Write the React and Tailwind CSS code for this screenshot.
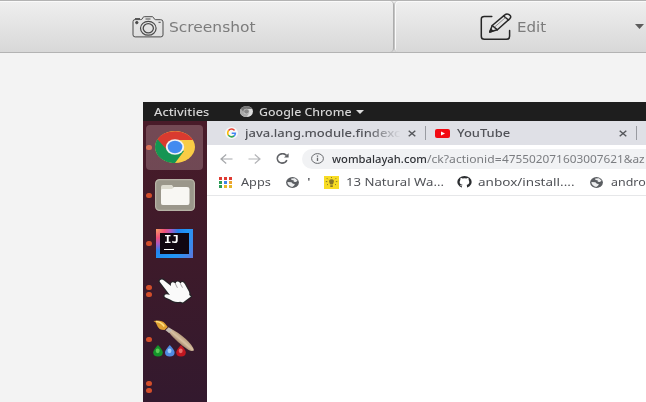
import React, { useLayoutEffect, useRef, useState } from "react";

/* Single line label stretched horizontally to occupy a given width. */
function Label({ width, className = "", children }) {
  const ref = useRef(null);
  const [scale, setScale] = useState(1);
  useLayoutEffect(() => {
    setScale(width / ref.current.offsetWidth);
  }, [width]);
  return (
    <span className="block shrink-0" style={{ width }}>
      <span
        ref={ref}
        className={"inline-block origin-left whitespace-nowrap align-top " + className}
        style={{ transform: `scaleX(${scale})` }}
      >
        {children}
      </span>
    </span>
  );
}

function Camera() {
  return (
    <svg className="h-[22px] w-8 shrink-0" viewBox="0 0 32 22" fill="none" stroke="#4a4a4a" strokeWidth="1">
      <path d="M10 3.2 11.2 1.2Q11.6.7 12.3.7h7.8q.8 0 1.2.6l1.2 1.9q.4.5 1.2.5h5q2.3 0 2.3 2.2v13q0 2-2.2 2H3.2q-2.2 0-2.2-2V5.6q0-2 2-2h5.4q1.1 0 1.6-.4Z" />
      <ellipse cx="16.3" cy="12.3" rx="7.8" ry="6.9" strokeWidth="1.2" />
      <ellipse cx="16.3" cy="12.3" rx="5.1" ry="4.6" strokeWidth="1.3" />
      <path d="M13.5 3h5M3 2.6h5M26.5 6.3h2.2" />
      <circle cx="4.8" cy="6.6" r="1.2" fill="#444" />
    </svg>
  );
}

function EditIcon() {
  return (
    <svg className="h-7 w-8 shrink-0" viewBox="0 0 32 28" fill="none" stroke="#262626" strokeWidth="1.5" strokeLinecap="round" strokeLinejoin="round">
      <path d="M11.8 3.4H4.3Q1.3 3.4 1.3 6.2v17q0 3.1 3.1 3.1h22q3.2 0 3.2-3.1v-5.7" />
      <path d="m9.8 19 2.4-6.5L24.8 1.9q1.8-1.6 3.9-.5l1 .7q2 1.5.2 3.5L17.4 16.8Z" />
      <path d="m12.2 12.5 5.2 4.3M23.6 3l4.9 4" />
      <path d="m9.8 19 3-.9-2-1.8Z" fill="#262626" />
      <path d="M15.1 13.6 25.2 4.8" strokeWidth=".7" stroke="#666" />
    </svg>
  );
}

function ChromeIcon({ className, gray }) {
  const [r, g, y, b] = gray ? ["#777", "#aaa", "#ddd", "#888"] : ["#d93a2f", "#159553", "#f9cc45", "#438bf0"];
  return (
    <svg className={className} viewBox="0 0 40 32" preserveAspectRatio="none">
      <ellipse cx="20" cy="16" rx="20" ry="16" fill={y} />
      <path d="M2.5 8.3A20 16 0 0 0 20 32L29 20 20 16Z" fill={g} />
      <path d="M2.5 8.3C9-2.2 31-3 38 9H20L12 19Z" fill={r} />
      <ellipse cx="20" cy="16" rx="9.2" ry="7.8" fill={gray ? "#ccc" : "#f2f3f4"} />
      <ellipse cx="20" cy="16" rx="7.3" ry="6.2" fill={b} />
    </svg>
  );
}

function Google() {
  return (
    <svg className="h-3 w-[13px] shrink-0" viewBox="0 0 14 12" preserveAspectRatio="none">
      <ellipse cx="7" cy="6" rx="7" ry="6" fill="#f8f8f8" />
      <g fill="none" strokeWidth="1.6">
        <path d="M10.3 3.3Q6.5.6 3.7 3.6" stroke="#e84335" />
        <path d="M3.8 3.5Q2 6 3.7 8.4" stroke="#fbbc05" />
        <path d="M3.6 8.3Q6.2 11 9.8 9" stroke="#34a853" />
        <path d="M7.2 6.2h4q0 1.9-1.5 3" stroke="#4285f4" />
      </g>
    </svg>
  );
}

function Globe() {
  return (
    <svg className="h-[11px] w-[13px] shrink-0" viewBox="0 0 13 11">
      <ellipse cx="6.5" cy="5.5" rx="6.4" ry="5.4" fill="#5b5e62" />
      <path d="M5.2 1.5 9 1.2l2.6 2.5-1.8 1.4-2-.4L7.6 3.3 5.4 3.1ZM1.4 5.1l4 .1 1.5 1.5 1.9.4-.6 1.5-2 1.3Q1.5 8.9 1.4 5.1Z" fill="#edeeef" />
    </svg>
  );
}

function AppsGrid() {
  const colors = ["#df3b32", "#df3b32", "#df3b32", "#2d9d58", "#3c83e8", "#eda32e", "#2d9d58", "#e5b62b", "#e5b62b"];
  return (
    <div className="grid h-[11px] w-[13px] shrink-0 grid-cols-3 grid-rows-3 gap-x-[2px] gap-y-px">
      {colors.map((c, i) => (
        <span key={i} style={{ backgroundColor: c }} />
      ))}
    </div>
  );
}

function Bulb() {
  return (
    <svg className="h-[13px] w-[15px] shrink-0" viewBox="0 0 15 13">
      <path d="M0 0h15v13H0Z" fill="#f8dc24" />
      <path d="M5.6 7.3Q4 3.2 7.5 3.2T9.4 7.3L8.7 8.5H6.3ZM6.3 9.2h2.5v1.9H6.3Z" fill="#85752a" />
      <path d="M7.5 1v1M2.8 2.2l1 1M12.2 2.2l-1 1M1.8 5.6h1.5M11.8 5.6h1.5M3 9l1-.8M12 9l-1-.8" stroke="#6d6229" strokeWidth=".8" />
    </svg>
  );
}

function Octocat() {
  return (
    <svg className="h-3 w-[15px] shrink-0" viewBox="0 0 15 12">
      <ellipse cx="7.5" cy="6" rx="7.2" ry="5.9" fill="#2b2d30" />
      <path d="M3.6 1.7 5.7 2.5q1.8-.5 3.6 0l2.1-.8.3 2.2q1.9 4-2.1 5 .4.5.4 1.2V12H5V10.2Q3.6 10.3 2.9 9q1.4.6 2.4.3l.2-.5q-4.3-1-2.2-4.9Z" fill="#fff" />
    </svg>
  );
}

function Close() {
  return (
    <svg className="h-[7px] w-2 shrink-0" viewBox="0 0 8 7" stroke="#54565a" strokeWidth="1.4">
      <path d="m.7.7 6.6 5.6M7.3.7.7 6.3" />
    </svg>
  );
}

function Arrow({ flip }) {
  return (
    <svg className={flip ? "h-[10px] w-[13px] shrink-0 -scale-x-100" : "h-[10px] w-[13px] shrink-0"} viewBox="0 0 13 10" fill="none" stroke={flip ? "#b4b5b8" : "#a6a8ab"} strokeWidth="1.2">
      <path d="M12.5 5H1M6.2.5 1 5l5.2 4.5" />
    </svg>
  );
}

function DockItem({ dots, children }) {
  return (
    <div className="flex h-12 shrink-0 items-center">
      <div className="flex w-[11px] shrink-0 flex-col items-center gap-[2px]">
        {Array.from({ length: dots }, (_, i) => (
          <span key={i} className="h-[5px] w-[6px] rounded-full bg-[#d24e2b]" />
        ))}
      </div>
      {children}
    </div>
  );
}

function Folder() {
  return (
    <svg className="ml-px h-8 w-10" viewBox="0 0 40 32">
      <rect x=".6" y=".6" width="38.8" height="30.8" rx="4" fill="#9b978b" stroke="#b7b3a6" strokeWidth="1.2" />
      <path d="M6 8q0-2 2-2h9l2 3H32q2 0 2 2v13q0 2-2 2H8q-2 0-2-2Z" fill="#dedcd1" />
      <path d="M6 11.5q0-1.5 1.5-1.5H17l2-2h13q2.5 0 2.5 2V23.5q0 2.5-2.5 2.5H8.4q-2.4 0-2.4-2.5Z" fill="#f8f7f3" />
    </svg>
  );
}

function Idea() {
  return (
    <div className="ml-[2px] flex h-[29px] w-[37px] bg-[radial-gradient(circle_at_0_0,#f7a064_0,#f04f78_9px,#a95bc4_15px,#2383ee_22px,#1f98f8_32px,#5c79dd_46px)] px-[4px] py-[4px]">
      <div className="flex w-full flex-col bg-[#100711] pl-[4px] pt-[2px] font-['DejaVu_Sans_Mono',monospace] text-[10px] font-bold leading-[9px] text-white">
        <Label width={15}>IJ</Label>
        <span className="mt-[5px] h-[1.5px] w-[10px] bg-white" />
      </div>
    </div>
  );
}

function Hand() {
  return (
    <svg className="ml-[3px] h-[26px] w-9" viewBox="0 0 36 26">
      <path d="M3 2.2Q4.8.8 7 2.4L14 8q-.6-3 1.4-3.7 1.8-.5 3.2 1.5.2-2.2 2-2.2 1.7 0 3 2.2.2-2 1.9-1.8 1.4.2 2.4 2.2L32 13.8q.6 1.8.3 3.2l1.6 1.4-8 6.1-2.8-.8q-3.6 1-7.3-.8-2.7-1.6-7.3-3.4-2-1.3-.6-2.7 1.4-1 5 .2L3.3 4.5Q2 3.3 3 2.2Z" fill="#fafafa" stroke="#262428" strokeWidth="2.4" paintOrder="stroke" strokeLinejoin="round" />
      <path d="m18.4 5.8 2 4M23.5 6l2 3.7" stroke="#8d898d" strokeWidth=".8" />
    </svg>
  );
}

function Brush() {
  return (
    <svg className="-ml-px mb-1 h-[38px] w-[43px] translate-y-[2px]" viewBox="0 0 43 38">
      <defs>
        <linearGradient id="handle" x1="0" y1="1" x2="1" y2="0">
          <stop offset=".35" stopColor="#8d6d54" />
          <stop offset=".5" stopColor="#d8c1a2" />
          <stop offset=".66" stopColor="#a6896a" />
        </linearGradient>
      </defs>
      <path d="m14.5 11 3-2.6q7 3.3 15 10.3 7 6.3 8.5 11.5-1.8 1.6-5.4-.2Q25 23.5 14.5 11Z" fill="url(#handle)" />
      <path d="m12.5 10.2 3.2-3 3.6 2.8-3.2 3Z" fill="#c5bcb2" />
      <path d="M.5 1Q8-.6 12 3.4l2.8 3.5-3.2 3.2Q5.5 10 4 5.2 3.2 2 .5 1Z" fill="#dfa032" />
      <path d="M3 1.5q5 .2 8.3 5" stroke="#ffe080" strokeWidth="1.5" fill="none" />
      {[
        [5, "#14932a", "#6fda63"],
        [16.8, "#508be2", "#b5dcff"],
        [28, "#c01620", "#f4817a"],
      ].map(([x, fill, shine]) => (
        <g key={x}>
          <path d={`M${x} 25q-4.8 5-4.8 7.5 0 4 4.8 4t4.8-4Q${x + 4.8} 30 ${x} 25Z`} fill={fill} />
          <ellipse cx={x - 0.3} cy="30.8" rx="2" ry="2.4" fill={shine} opacity=".8" />
        </g>
      ))}
    </svg>
  );
}

function Toolbar() {
  return (
    <header className="flex h-[53px] shrink-0 border-b border-t border-[#b3b3b3] bg-gradient-to-b from-[#efefef] to-[#d8d8d8] font-['DejaVu_Sans',sans-serif] text-[13.5px] leading-5 text-[#7c7c7c]">
      <div className="flex w-[394px] shrink-0 items-center rounded-r-sm border-r border-r-[#adadad] pl-[132px] shadow-[inset_0_1px_0_#fafafa]">
        <Camera />
        <div className="ml-[5px] pt-px"><Label width={87}>Screenshot</Label></div>
      </div>
      <div className="flex w-[260px] shrink-0 items-center rounded-l-sm border-l border-l-[#c3c3c3] pl-[85px] shadow-[inset_1px_1px_0_#fafafa]">
        <EditIcon />
        <div className="ml-[5px] pt-px"><Label width={29}>Edit</Label></div>
        <svg className="ml-[89px] h-[5px] w-[9px] shrink-0" viewBox="0 0 10 5" preserveAspectRatio="none"><path d="M0 0h10L5 5Z" fill="#5c5c5c" /></svg>
      </div>
    </header>
  );
}

function Dock() {
  return (
    <aside className="flex w-16 shrink-0 flex-col bg-gradient-to-b from-[#491b29] via-[#3d1a2a] to-[#33192e] pt-[2px]">
      <DockItem dots={1}>
        <div className="-ml-[8px] flex h-[45px] w-[57px] items-center rounded bg-[#f3d3d9]/25 pl-[9px]"><ChromeIcon className="h-8 w-10" /></div>
      </DockItem>
      <DockItem dots={1}><Folder /></DockItem>
      <DockItem dots={1}><Idea /></DockItem>
      <DockItem dots={2}><Hand /></DockItem>
      <DockItem dots={1}><Brush /></DockItem>
      <DockItem dots={2} />
    </aside>
  );
}

function Browser() {
  return (
    <main className="w-[439px] shrink-0 overflow-hidden bg-white">
      <div className="flex h-6 w-[500px] items-center bg-[#dfe0e6] pl-[18px] text-[11px] font-medium leading-4 text-[#515258]">
        <Google />
        <div className="ml-[7px] w-[156px] [mask-image:linear-gradient(to_right,black_78%,transparent)]"><Label width={155}>java.lang.module.findexc</Label></div>
        <div className="ml-[7px]"><Close /></div>
        <span className="ml-[9px] h-[14px] w-px bg-[#999ba1]" />
        <svg className="ml-[9px] h-[9px] w-[15px] shrink-0" viewBox="0 0 15 9"><rect width="15" height="9" rx="2" fill="#f20b13" /><path d="m6 2.4 4 2.1-4 2.1Z" fill="white" /></svg>
        <div className="ml-[7px]"><Label width={53}>YouTube</Label></div>
        <div className="ml-[109px]"><Close /></div>
        <span className="ml-[9px] h-[14px] w-px bg-[#999ba1]" />
      </div>
      <div className="flex h-[27px] w-[500px] items-center pl-[13px] text-[11px] leading-4">
        <Arrow />
        <div className="ml-[15px]"><Arrow flip /></div>
        <svg className="ml-[15px] h-[11px] w-[13px] shrink-0" viewBox="0 0 13 10" preserveAspectRatio="none" fill="none" stroke="#606266" strokeWidth="1.5"><path d="M10.5 2.2Q8-.2 4.5 1 1 2.5 1.3 5.4 1.9 8.8 5.9 9.2q3.7 0 5-2.7" /><path d="M12.6.2v4H8Z" fill="#606266" stroke="none" /></svg>
        <div className="ml-[13px] flex h-5 w-[370px] items-center rounded-l-full bg-[#f1f2f4] pl-[9px] text-[#7b7d81]">
          <svg className="h-[11px] w-[13px] shrink-0" viewBox="0 0 13 11" fill="none" stroke="#66686c"><ellipse cx="6.5" cy="5.5" rx="5.9" ry="4.9" /><path d="M6.5 4.8v3.1M6.5 2.6v1.2" strokeWidth="1.3" /></svg>
          <div className="ml-[8px] font-medium text-[#313338]"><Label width={95}>wombalayah.com</Label></div>
          <Label width={75}>/ck?actionid=</Label>
          <Label width={143}>475502071603007621&amp;az</Label>
        </div>
      </div>
      <div className="flex h-6 w-[500px] items-center border-b border-[#e6e7e9] pb-[3px] pl-3 text-[11px] leading-4 text-[#505257]">
        <AppsGrid />
        <div className="ml-[9px]"><Label width={30}>Apps</Label></div>
        <div className="ml-[15px]"><Globe /></div>
        <div className="ml-[8px]"><Label width={3}>'</Label></div>
        <div className="ml-[14px]"><Bulb /></div>
        <div className="ml-[7px]"><Label width={98}>13 Natural Wa...</Label></div>
        <div className="ml-[13px]"><Octocat /></div>
        <div className="ml-[6px]"><Label width={97}>anbox/install....</Label></div>
        <div className="ml-[15px]"><Globe /></div>
        <div className="ml-2"><Label width={35}>andro</Label></div>
      </div>
    </main>
  );
}

export default function App() {
  return (
    <div className="flex h-[402px] w-[646px] flex-col overflow-hidden bg-[#f3f3f3]">
      <Toolbar />
      <section className="ml-[143px] mt-[49px] flex h-[300px] flex-col overflow-hidden font-['Noto_Sans',sans-serif]">
        <div className="flex h-[19px] shrink-0 items-center bg-[#1e1e1e] pl-[11px] text-[10.5px] font-medium leading-4 text-[#d4d4d4]">
          <Label width={55}>Activities</Label>
          <ChromeIcon gray className="ml-[31px] h-[11px] w-[13px] shrink-0" />
          <div className="ml-[6px]"><Label width={92}>Google Chrome</Label></div>
          <svg className="ml-[5px] h-[4px] w-2 shrink-0" viewBox="0 0 8 4"><path d="M0 0h8L4 4Z" fill="#ddd" /></svg>
        </div>
        <div className="flex min-h-0 grow"><Dock /><Browser /></div>
      </section>
    </div>
  );
}
